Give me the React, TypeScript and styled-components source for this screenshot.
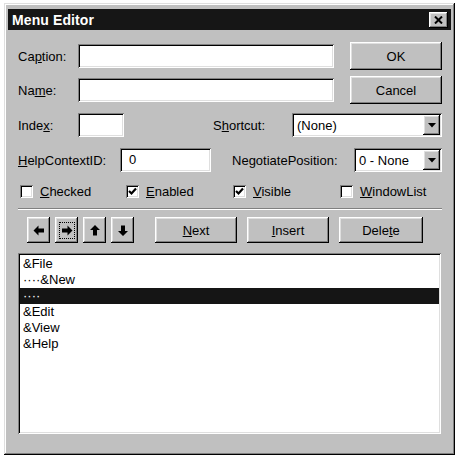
import styled, { createGlobalStyle } from "styled-components";

const GlobalStyle = createGlobalStyle`
  body {
    margin: 0;
    background: #fff;
    font-family: "Liberation Sans", Arial, sans-serif;
    font-size: 13px;
    color: #000;
  }
`;

const raised = `
  box-shadow: inset -1px -1px #000, inset 1px 1px #fff,
    inset -2px -2px #808080, inset 2px 2px #dfdfdf;
`;

const sunken = `
  box-shadow: inset 1px 1px #808080, inset -1px -1px #fff,
    inset 2px 2px #000, inset -2px -2px #dfdfdf;
`;

const Window = styled.div`
  box-sizing: border-box;
  width: 451px;
  height: 452px;
  margin: 3px 0 0 4px;
  padding: 6px 4px 4px;
  background: #c0c0c0;
  display: flex;
  flex-direction: column;
  box-shadow: inset -1px -1px #000, inset 1px 1px #dfdfdf,
    inset -2px -2px #808080, inset 2px 2px #fff;
`;

const TitleBar = styled.div`
  height: 21px;
  background: #161616;
  display: flex;
  align-items: center;
  justify-content: space-between;
  padding: 0 3px 0 4px;
`;

const Title = styled.span`
  color: #fff;
  font-weight: bold;
  font-size: 14px;
  letter-spacing: 0.1px;
`;

const CloseButton = styled.div`
  width: 19px;
  height: 16px;
  background: #c0c0c0;
  display: flex;
  align-items: center;
  justify-content: center;
  ${raised}
`;

const Body = styled.div`
  display: flex;
  flex-direction: column;
  padding: 0 9px 0 10px;
`;

const TopBlock = styled.div`
  display: flex;
  justify-content: space-between;
  margin-top: 12px;
`;

const FieldColumn = styled.div`
  display: flex;
  flex-direction: column;
  gap: 10px;
  padding-top: 2px;
`;

const ButtonColumn = styled.div`
  display: flex;
  flex-direction: column;
  gap: 6px;
`;

const Row = styled.div<{ $top: number }>`
  display: flex;
  align-items: center;
  height: 24px;
  margin-top: ${(p) => p.$top}px;
`;

const Label = styled.label<{ $w: number; $gap?: number }>`
  width: ${(p) => p.$w}px;
  margin-left: ${(p) => p.$gap ?? 0}px;
  white-space: nowrap;
`;

const Key = styled.span`
  text-decoration: underline;
  text-underline-offset: 1px;
`;

const TextBox = styled.div<{ $w: number }>`
  box-sizing: border-box;
  width: ${(p) => p.$w}px;
  height: 24px;
  background: #fff;
  padding: 4px 9px;
  ${sunken}
`;

const Combo = styled.div<{ $w: number }>`
  box-sizing: border-box;
  width: ${(p) => p.$w}px;
  height: 24px;
  background: #fff;
  padding: 2px;
  display: flex;
  align-items: center;
  ${sunken}
`;

const ComboText = styled.span`
  flex: 1;
  padding-left: 3px;
`;

const DropButton = styled.div`
  width: 17px;
  height: 20px;
  background: #c0c0c0;
  display: flex;
  align-items: center;
  justify-content: center;
  ${raised}
`;

const Button = styled.div<{ $w: number; $h?: number }>`
  box-sizing: border-box;
  width: ${(p) => p.$w}px;
  height: ${(p) => p.$h ?? 28}px;
  background: #c0c0c0;
  display: flex;
  align-items: center;
  justify-content: center;
  ${raised}
`;

const CheckRow = styled.div`
  display: grid;
  grid-template-columns: 106px 107px 107px auto;
  margin-top: 12px;
  padding-left: 2px;
  height: 14px;
  align-items: center;
`;

const CheckItem = styled.div`
  display: flex;
  align-items: center;
  gap: 7px;
`;

const CheckBox = styled.div`
  width: 13px;
  height: 13px;
  background: #fff;
  display: flex;
  align-items: center;
  justify-content: center;
  ${sunken}
`;

const Separator = styled.div`
  margin-top: 10px;
  height: 0;
  border-top: 1px solid #808080;
  border-bottom: 1px solid #fff;
`;

const ToolRow = styled.div`
  display: flex;
  align-items: center;
  margin-top: 7px;
  height: 26px;
`;

const ArrowGroup = styled.div`
  display: flex;
  gap: 5px;
  padding-left: 9px;
  margin-right: 21px;
`;

const ActionGroup = styled.div`
  display: flex;
  gap: 10px;
`;

const FocusBox = styled.div`
  display: flex;
  align-items: center;
  justify-content: center;
  padding: 2px 1px;
  outline: 1px dotted #000;
`;

const ListBox = styled.div`
  box-sizing: border-box;
  margin-top: 10px;
  width: 423px;
  height: 181px;
  background: #fff;
  padding: 3px 2px 2px;
  ${sunken}
`;

const ListItem = styled.div<{ $selected?: boolean }>`
  height: 16px;
  line-height: 16px;
  padding-left: 3px;
  white-space: pre;
  background: ${(p) => (p.$selected ? "#151515" : "transparent")};
  color: ${(p) => (p.$selected ? "#fff" : "#000")};
`;

type Dir = "left" | "right" | "up" | "down";

function Arrow({ dir }: { dir: Dir }) {
  const rot = { left: 0, right: 180, up: 90, down: 270 }[dir];
  return (
    <svg width="12" height="11" viewBox="0 0 12 11">
      <polygon
        transform={`rotate(${rot} 6 5.5)`}
        points="0.5,5.5 5.5,0.5 5.5,3.5 11,3.5 11,7.5 5.5,7.5 5.5,10.5"
        fill="#000"
      />
    </svg>
  );
}

function CheckMark() {
  return (
    <svg width="9" height="9" viewBox="0 0 9 9">
      <polyline
        points="1,4 3.5,6.5 8,1.5"
        fill="none"
        stroke="#000"
        strokeWidth="2.2"
      />
    </svg>
  );
}

function DownTriangle() {
  return (
    <svg width="8" height="5" viewBox="0 0 8 5">
      <polygon points="0,0 8,0 4,4.5" fill="#000" />
    </svg>
  );
}

function Check({ checked, children }: { checked: boolean; children: React.ReactNode }) {
  return (
    <CheckItem>
      <CheckBox>{checked && <CheckMark />}</CheckBox>
      <span>{children}</span>
    </CheckItem>
  );
}

const items = [
  { text: "&File" },
  { text: "····&New" },
  { text: "····", selected: true },
  { text: "&Edit" },
  { text: "&View" },
  { text: "&Help" },
];

export default function App() {
  return (
    <>
      <GlobalStyle />
      <Window>
        <TitleBar>
          <Title>Menu Editor</Title>
          <CloseButton>
            <svg width="9" height="8" viewBox="0 0 9 8">
              <path d="M1 0.5 L8 7.5 M8 0.5 L1 7.5" stroke="#000" strokeWidth="2" />
            </svg>
          </CloseButton>
        </TitleBar>
        <Body>
          <TopBlock>
            <FieldColumn>
              <Row $top={0}>
                <Label $w={60}>
                  Ca<Key>p</Key>tion:
                </Label>
                <TextBox $w={256} />
              </Row>
              <Row $top={0}>
                <Label $w={60}>
                  Na<Key>m</Key>e:
                </Label>
                <TextBox $w={256} />
              </Row>
            </FieldColumn>
            <ButtonColumn>
              <Button $w={92}>OK</Button>
              <Button $w={92}>Cancel</Button>
            </ButtonColumn>
          </TopBlock>

          <Row $top={9}>
            <Label $w={60}>
              Inde<Key>x</Key>:
            </Label>
            <TextBox $w={46} />
            <Label $w={79} $gap={89}>
              S<Key>h</Key>ortcut:
            </Label>
            <Combo $w={150}>
              <ComboText>(None)</ComboText>
              <DropButton>
                <DownTriangle />
              </DropButton>
            </Combo>
          </Row>

          <Row $top={11}>
            <Label $w={102}>
              <Key>H</Key>elpContextID:
            </Label>
            <TextBox $w={91}>0</TextBox>
            <Label $w={122} $gap={21}>
              Ne<Key>g</Key>otiatePosition:
            </Label>
            <Combo $w={88}>
              <ComboText>0 - None</ComboText>
              <DropButton>
                <DownTriangle />
              </DropButton>
            </Combo>
          </Row>

          <CheckRow>
            <Check checked={false}>
              <Key>C</Key>hecked
            </Check>
            <Check checked>
              <Key>E</Key>nabled
            </Check>
            <Check checked>
              <Key>V</Key>isible
            </Check>
            <Check checked={false}>
              <Key>W</Key>indowList
            </Check>
          </CheckRow>

          <Separator />

          <ToolRow>
            <ArrowGroup>
              <Button $w={23} $h={26}>
                <Arrow dir="left" />
              </Button>
              <Button $w={23} $h={26}>
                <FocusBox>
                  <Arrow dir="right" />
                </FocusBox>
              </Button>
              <Button $w={23} $h={26}>
                <Arrow dir="up" />
              </Button>
              <Button $w={23} $h={26}>
                <Arrow dir="down" />
              </Button>
            </ArrowGroup>
            <ActionGroup>
              <Button $w={82} $h={26}>
                <span>
                  <Key>N</Key>ext
                </span>
              </Button>
              <Button $w={82} $h={26}>
                <span>
                  <Key>I</Key>nsert
                </span>
              </Button>
              <Button $w={84} $h={26}>
                <span>
                  Dele<Key>t</Key>e
                </span>
              </Button>
            </ActionGroup>
          </ToolRow>

          <ListBox>
            {items.map((it, i) => (
              <ListItem key={i} $selected={it.selected}>
                {it.text}
              </ListItem>
            ))}
          </ListBox>
        </Body>
      </Window>
    </>
  );
}
